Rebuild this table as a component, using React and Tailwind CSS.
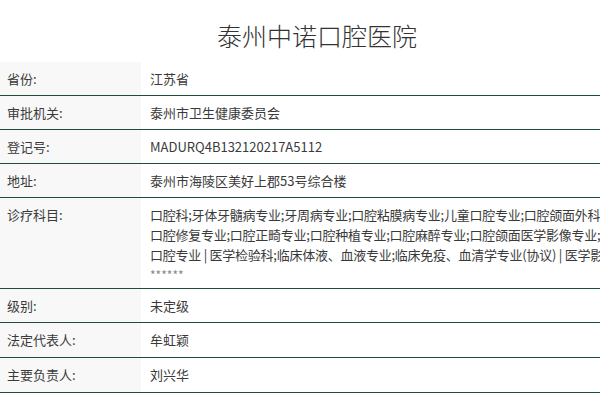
import React from "react";

const rows = [
  { label: "省份:", value: "江苏省" },
  { label: "审批机关:", value: "泰州市卫生健康委员会" },
  { label: "登记号:", value: "MADURQ4B132120217A5112" },
  { label: "地址:", value: "泰州市海陵区美好上郡53号综合楼" },
];

const rows2 = [
  { label: "级别:", value: "未定级", h: "h-[33px]" },
  { label: "法定代表人:", value: "牟虹颖", h: "h-[34px]" },
  { label: "主要负责人:", value: "刘兴华", h: "h-[34px]" },
];

function Row({ label, value, h = "h-[33px]" }) {
  return (
    <div className={`flex ${h} border-b border-[#1f4d38] box-content`}>
      <div className="w-[141px] shrink-0 bg-[#f8f8f8] pl-[7px] flex items-center">{label}</div>
      <div className="flex-1 pl-[9px] flex items-center whitespace-nowrap">{value}</div>
    </div>
  );
}

export default function App() {
  return (
    <div
      className="w-[600px] h-[400px] overflow-hidden bg-white text-[13px] text-[#3a3a3a]"
      style={{ fontFamily: '"Noto Sans CJK SC", "Noto Sans", sans-serif' }}
    >
      <div className="w-[634px]">
        <div className="h-[62px] pt-[10px] flex items-center justify-center text-[25px] font-light text-[#333]">
          泰州中诺口腔医院
        </div>
        {rows.map((r) => (
          <Row key={r.label} {...r} />
        ))}
        <div className="flex border-b border-[#1f4d38]">
          <div className="w-[141px] shrink-0 bg-[#f8f8f8] pl-[7px] pt-[7px] leading-[20px]">诊疗科目:</div>
          <div className="flex-1 pl-[9px] pt-[7px] pb-[3px] leading-[20px] tracking-[-0.25px] whitespace-nowrap overflow-hidden">
            <div>口腔科;牙体牙髓病专业;牙周病专业;口腔粘膜病专业;儿童口腔专业;口腔颌面外科专业;</div>
            <div>口腔修复专业;口腔正畸专业;口腔种植专业;口腔麻醉专业;口腔颌面医学影像专业;预防</div>
            <div>口腔专业 | 医学检验科;临床体液、血液专业;临床免疫、血清学专业(协议) | 医学影像科</div>
            <div className="text-[#888] text-[12px] tracking-normal">******</div>
          </div>
        </div>
        {rows2.map((r) => (
          <Row key={r.label} {...r} />
        ))}
      </div>
    </div>
  );
}
